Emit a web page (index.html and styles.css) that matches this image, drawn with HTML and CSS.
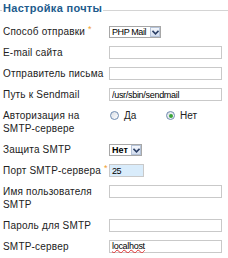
FILE: index.html
```
<!DOCTYPE html>
<html lang="ru">

<head>
    <meta charset="UTF-8">
    <meta name="viewport" content="width=device-width, initial-scale=1.0">
    <title>Настройка почты</title>
    <link rel="stylesheet" href="styles.css">
</head>

<body>
    <div class="panel">
        <div class="panel-title"><span>Настройка почты</span></div>

        <div class="form">
            <label class="label">Способ отправки <span class="req">*</span></label>
            <div class="select select-mail">
                <span class="select-value">PHP Mail</span>
                <span class="select-btn">
                    <svg width="7" height="5" viewBox="0 0 7 5"><path d="M0.5 0.8 L3.5 3.8 L6.5 0.8" fill="none" stroke="#2b3f66" stroke-width="1.6"/></svg>
                </span>
            </div>

            <label class="label">E-mail сайта</label>
            <input class="field" type="text" value="">

            <label class="label">Отправитель письма</label>
            <input class="field" type="text" value="">

            <label class="label">Путь к Sendmail</label>
            <input class="field field-small" type="text" value="/usr/sbin/sendmail">

            <label class="label">Авторизация на<br>SMTP-сервере</label>
            <div class="radios">
                <span class="radio-item"><span class="radio"></span>Да</span>
                <span class="radio-item"><span class="radio checked"></span>Нет</span>
            </div>

            <label class="label">Защита SMTP</label>
            <div class="select select-secure">
                <span class="select-value">Нет</span>
                <span class="select-btn">
                    <svg width="7" height="5" viewBox="0 0 7 5"><path d="M0.5 0.8 L3.5 3.8 L6.5 0.8" fill="none" stroke="#2b3f66" stroke-width="1.6"/></svg>
                </span>
            </div>

            <label class="label">Порт SMTP-сервера <span class="req">*</span></label>
            <input class="field field-port" type="text" value="25">

            <label class="label">Имя пользователя<br>SMTP</label>
            <input class="field" type="text" value="">

            <label class="label">Пароль для SMTP</label>
            <input class="field" type="password" value="">

            <label class="label">SMTP-сервер</label>
            <div class="field field-fake"><span class="misspelled">localhost</span></div>
        </div>
    </div>
</body>
</html>
```

FILE: styles.css
```
* {
    margin: 0;
    padding: 0;
    box-sizing: border-box;
}

body {
    background-color: #fff;
    font-family: 'Liberation Sans', Arial, sans-serif;
    font-size: 10px;
    color: #222;
}

.panel {
    padding-top: 1px;
}

/* Title with line */
.panel-title {
    display: flex;
    line-height: 14px;
    font-size: 11px;
    font-weight: bold;
    color: #215b8c;
    letter-spacing: 0.3px;
}

.panel-title::before,
.panel-title::after {
    content: "";
    height: 1px;
    margin-top: 9px;
    background-color: #d4d4d4;
}

.panel-title::before {
    width: 2px;
}

.panel-title::after {
    flex: 1;
}

.panel-title span {
    padding: 0 1px;
}

/* Form grid */
.form {
    display: grid;
    grid-template-columns: 106px 113px;
    row-gap: 8px;
    padding-left: 3px;
    margin-top: 10px;
    align-items: start;
}

.label {
    line-height: 13px;
    white-space: nowrap;
    letter-spacing: 0.2px;
}

.req {
    color: #f0a030;
    font-size: 9px;
    vertical-align: top;
    line-height: 9px;
}

.field {
    display: block;
    width: 113px;
    height: 13px;
    border: 1px solid #c9c9c9;
    background: #fff;
    font-family: 'Liberation Sans', Arial, sans-serif;
    font-size: 9px;
    color: #000;
    padding: 0 2px;
    outline: none;
}

.field-small {
    letter-spacing: -0.3px;
}

.field-port {
    width: 35px;
    background-color: #d9ecfb;
    letter-spacing: -0.5px;
}

.field-fake {
    line-height: 10px;
}

.misspelled {
    text-decoration: underline wavy #e03030;
    text-decoration-thickness: 1px;
    text-underline-offset: 0;
    letter-spacing: -0.3px;
}

/* Select */
.select {
    display: flex;
    align-items: center;
    height: 12px;
    margin-top: 1px;
    border: 1px solid #a7a7a7;
    background: #fff;
    font-size: 9px;
    line-height: 10px;
    white-space: nowrap;
    color: #000;
}

.select-mail {
    width: 52px;
    letter-spacing: -0.4px;
}

.select-secure {
    width: 33px;
    font-weight: bold;
}

.select-value {
    flex: 1;
    padding-left: 2px;
    overflow: hidden;
}

.select-btn {
    display: flex;
    align-items: center;
    justify-content: center;
    width: 10px;
    height: 10px;
    border: 1px solid #b5c3d8;
    background: linear-gradient(#f4f7fc, #d3def0);
}

/* Radios */
.radios {
    display: flex;
    line-height: 13px;
}

.radio-item {
    display: flex;
    align-items: center;
    width: 56px;
}

.radio {
    width: 9px;
    height: 9px;
    margin: 0 5px 0 1px;
    border: 1px solid #6f8bb0;
    border-radius: 50%;
    background: linear-gradient(135deg, #d8dde4, #fff);
    display: flex;
    align-items: center;
    justify-content: center;
}

.radio.checked::after {
    content: "";
    width: 4px;
    height: 4px;
    border-radius: 50%;
    background: #3aa33a;
}
```
